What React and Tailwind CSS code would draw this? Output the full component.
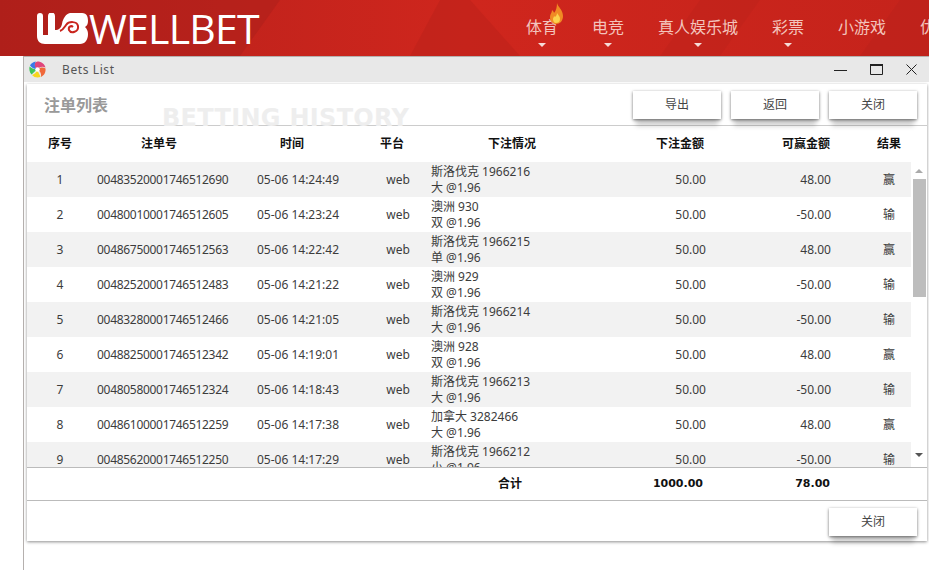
const rows = [
  ["1", "00483520001746512690", "05-06 14:24:49", "斯洛伐克 1966216", "大 @1.96", "48.00", "赢"],
  ["2", "00480010001746512605", "05-06 14:23:24", "澳洲 930", "双 @1.96", "-50.00", "输"],
  ["3", "00486750001746512563", "05-06 14:22:42", "斯洛伐克 1966215", "单 @1.96", "48.00", "赢"],
  ["4", "00482520001746512483", "05-06 14:21:22", "澳洲 929", "双 @1.96", "-50.00", "输"],
  ["5", "00483280001746512466", "05-06 14:21:05", "斯洛伐克 1966214", "大 @1.96", "-50.00", "输"],
  ["6", "00488250001746512342", "05-06 14:19:01", "澳洲 928", "双 @1.96", "48.00", "赢"],
  ["7", "00480580001746512324", "05-06 14:18:43", "斯洛伐克 1966213", "大 @1.96", "-50.00", "输"],
  ["8", "00486100001746512259", "05-06 14:17:38", "加拿大 3282466", "大 @1.96", "48.00", "赢"],
  ["9", "00485620001746512250", "05-06 14:17:29", "斯洛伐克 1966212", "小 @1.96", "-50.00", "输"],
];

const nav = [
  ["体育", true],
  ["电竞", true],
  ["真人娱乐城", true],
  ["彩票", true],
  ["小游戏", false],
  ["优惠", false],
];

const COLS = "grid grid-cols-[66px_132px_134px_68px_153px_126px_125px_80px]";

function LogoMark() {
  return (
    <svg width="53" height="31" viewBox="0 0 53 31" className="shrink-0">
      <path
        d="M1 3a3 3 0 0 1 6 0v19h5V3a3.500 3.500 0 0 1 7 0v14c4 0 6-2 7-6 1-6 4-10 8-11h12c5 0 6 4 6 8 0 3-1 5-3 6 2 2 3 4 3 7 0 6-3 10-8 10H9c-5 0-8-3-8-8z"
        fill="#fff"
      />
      <path
        d="M24 18c3-1 4-3 6-6 3-4 11-4 12 1 1 6-7 8-9 4-1-3 2-5 4-3"
        fill="none"
        stroke="#c9241d"
        strokeWidth="2"
      />
    </svg>
  );
}

function Flame() {
  return (
    <svg width="15" height="22" viewBox="0 0 15 22" className="absolute left-[23px] -top-[13px]">
      <path d="M8 0c1 4 6 7 6 13 0 5-3 8-7 8s-6-3-6-7c0-3 2-4 2-7 1 1 2 2 2 3 2-2 3-6 3-10z" fill="#f08a24" />
      <path d="M8 10c1 2 3 3 3 6s-2 4-4 4-3-2-3-4c0-1 1-2 1-3l1 1c1-1 2-2 2-4z" fill="#fbd34d" />
    </svg>
  );
}

function Pinwheel() {
  return (
    <svg width="17" height="17" viewBox="0 0 34 34" className="shrink-0">
      <path d="M17 17 C8 12 9 3 17 1 C25 1 31 6 33 13 C27 10 21 11 17 17z" fill="#e0457b" />
      <path d="M17 17 C23 12 29 12 33 15 C34 23 30 29 24 32 C25 26 23 20 17 17z" fill="#f0683a" />
      <path d="M17 17 C18 24 22 27 23 32 C17 34 10 33 6 28 C10 27 15 23 17 17z" fill="#f7d51d" />
      <path d="M17 17 C11 20 8 25 5 27 C1 23 0 16 1 11 C5 15 11 17 17 17z" fill="#3fc45a" />
      <path d="M17 17 C11 16 5 14 2 9 C4 5 8 2 14 1 C10 6 11 13 17 17z" fill="#3a78e8" />
      <circle cx="17" cy="17" r="4.5" fill="#fff" />
    </svg>
  );
}

function Btn({ children }) {
  return (
    <button
      type="button"
      className="w-[88px] h-[28px] bg-white text-[12px] text-[#444] shadow-[0_1px_3px_rgba(0,0,0,0.55),0_10px_5px_-3px_rgba(0,0,0,0.18)]"
    >
      {children}
    </button>
  );
}

export default function App() {
  return (
    <div
      className="w-[929px] h-[570px] overflow-hidden bg-white flex flex-col text-[12px] text-[#3c3c3c]"
      style={{ fontFamily: '"Noto Sans", "Noto Sans CJK SC", sans-serif' }}
    >
      {/* top site bar */}
      <header className="relative h-[56px] shrink-0 flex overflow-hidden bg-gradient-to-r from-[#b5201b] via-[#cf261d] to-[#c5231b]">
        <svg className="absolute inset-0" width="929" height="56" viewBox="0 0 929 56">
          <polygon points="0,0 280,0 240,56 0,56" fill="#a81f1a" opacity="0.45" />
          <polygon points="410,56 440,0 470,0 520,56" fill="#b7211b" opacity="0.45" />
          <polygon points="660,56 700,0 760,0 720,56" fill="#b7211b" opacity="0.3" />
          <polygon points="860,56 900,0 929,0 929,56" fill="#b7211b" opacity="0.4" />
        </svg>
        <div className="relative flex items-center pl-[36px] h-[56px] w-[526px] shrink-0">
          <LogoMark />
          <span
            className="text-white text-[41px] leading-none font-medium tracking-[-0.8px]"
            style={{ fontFamily: '"Open Sans", sans-serif' }}
          >
            WELLBET
          </span>
        </div>
        <nav className="relative flex gap-[34px] pt-[16px] shrink-0">
          {nav.map(([label, caret], i) => (
            <div key={label} className="relative h-[22px]">
              <span className="text-[16px] leading-[22px] text-[#f3c4bd] whitespace-nowrap">{label}</span>
              {i === 0 && <Flame />}
              {caret && (
                <span className="absolute left-1/2 -translate-x-1/2 top-[27px] w-0 h-0 border-x-[4px] border-x-transparent border-t-[4px] border-t-[#f6dcd8]" />
              )}
            </div>
          ))}
        </nav>
      </header>

      {/* dialog window */}
      <div className="ml-[23px] flex-1 flex flex-col border-l border-t border-[#b5b0ae] bg-white min-h-0">
        <div className="h-[25px] shrink-0 bg-[#e8e8e8] flex items-center pl-[5px]">
          <Pinwheel />
          <span className="ml-[16px] text-[12px] tracking-[0.6px] text-[#555]">Bets List</span>
          <div className="ml-auto flex items-center gap-[23px] pr-[12px]">
            <svg width="13" height="13" viewBox="0 0 13 13"><path d="M0 7.5h13" stroke="#222" strokeWidth="1" /></svg>
            <svg width="13" height="11" viewBox="0 0 13 11"><path d="M.5 1.500h12v9H.5z" fill="none" stroke="#222" /><path d="M0 1h13" stroke="#222" strokeWidth="2" /></svg>
            <svg width="11" height="11" viewBox="0 0 11 11"><path d="M.5.5l10 10M10.500.5l-10 10" stroke="#222" /></svg>
          </div>
        </div>

        <div className="mt-[2px] ml-[3px] mr-[2px] h-[457px] shrink-0 flex flex-col bg-white shadow-[0_1px_3px_rgba(0,0,0,0.45)]">
          {/* title row */}
          <div className="relative h-[42px] shrink-0 flex items-center justify-between pl-[17px] pr-[10px] border-b border-[#ccc]">
            <span className="text-[16px] font-bold text-[#999]">注单列表</span>
            <span
              className="absolute left-[135px] top-[21px] text-[24px] leading-[26px] tracking-[0.3px] font-bold text-[#eee] whitespace-nowrap"
              style={{ fontFamily: '"DejaVu Sans", sans-serif' }}
            >
              BETTING HISTORY
            </span>
            <div className="relative z-10 flex gap-[10px]">
              <Btn>导出</Btn>
              <Btn>返回</Btn>
              <Btn>关闭</Btn>
            </div>
          </div>

          {/* column heads */}
          <div className={`${COLS} h-[36px] shrink-0 items-center text-[12px] font-bold text-[#111]`}>
            <div className="text-center">序号</div>
            <div className="text-center">注单号</div>
            <div className="text-center">时间</div>
            <div className="text-center -ml-[2px]">平台</div>
            <div className="pl-[61px]">下注情况</div>
            <div className="text-right pr-[2px]">下注金额</div>
            <div className="text-right pr-[1px]">可赢金额</div>
            <div className="pl-[46px] whitespace-nowrap">结果</div>
          </div>

          {/* body + scrollbar */}
          <div className="relative h-[305px] shrink-0 flex overflow-hidden">
            <div className="w-[884px] shrink-0">
              {rows.map((r, i) => (
                <div key={r[0]} className={`${COLS} h-[35px] items-center ${i % 2 === 0 ? "bg-[#f2f2f2]" : "bg-white"}`}>
                  <div className="text-center">{r[0]}</div>
                  <div className="text-center pl-[4px] tracking-[-0.3px]">{r[1]}</div>
                  <div className="text-center pl-[12px]">{r[2]}</div>
                  <div className="text-center pl-[10px]">web</div>
                  <div className="pl-[4px] leading-[16px] whitespace-nowrap">
                    <div>{r[3]}</div>
                    <div>{r[4]}</div>
                  </div>
                  <div className="text-right">50.00</div>
                  <div className="text-right">{r[5]}</div>
                  <div className="pl-[52px] leading-[35px] whitespace-nowrap">{r[6]}</div>
                </div>
              ))}
            </div>
            <div className="flex-1 flex flex-col items-center">
              <span className="mt-[7px] w-0 h-0 border-x-[4px] border-x-transparent border-b-[4px] border-b-[#aaa]" />
              <div className="mt-[6px] w-[13px] h-[118px] bg-[#bdbdbd]" />
              <span className="mt-[156px] w-0 h-0 border-x-[4px] border-x-transparent border-t-[4px] border-t-[#555]" />
            </div>
          </div>

          {/* totals */}
          <div className={`${COLS} h-[34px] shrink-0 items-center border-y border-[#bbb] font-bold text-[#111]`}>
            <div className="col-span-5 text-right pr-[58px]">合计</div>
            <div className="text-right pr-[3px] text-[11px]" style={{ fontFamily: '"DejaVu Sans", sans-serif' }}>1000.00</div>
            <div className="text-right pr-[1px] text-[11px]" style={{ fontFamily: '"DejaVu Sans", sans-serif' }}>78.00</div>
          </div>

          {/* footer */}
          <div className="flex-1 flex items-start justify-end pt-[7px] pr-[10px]">
            <Btn>关闭</Btn>
          </div>
        </div>
      </div>
    </div>
  );
}
